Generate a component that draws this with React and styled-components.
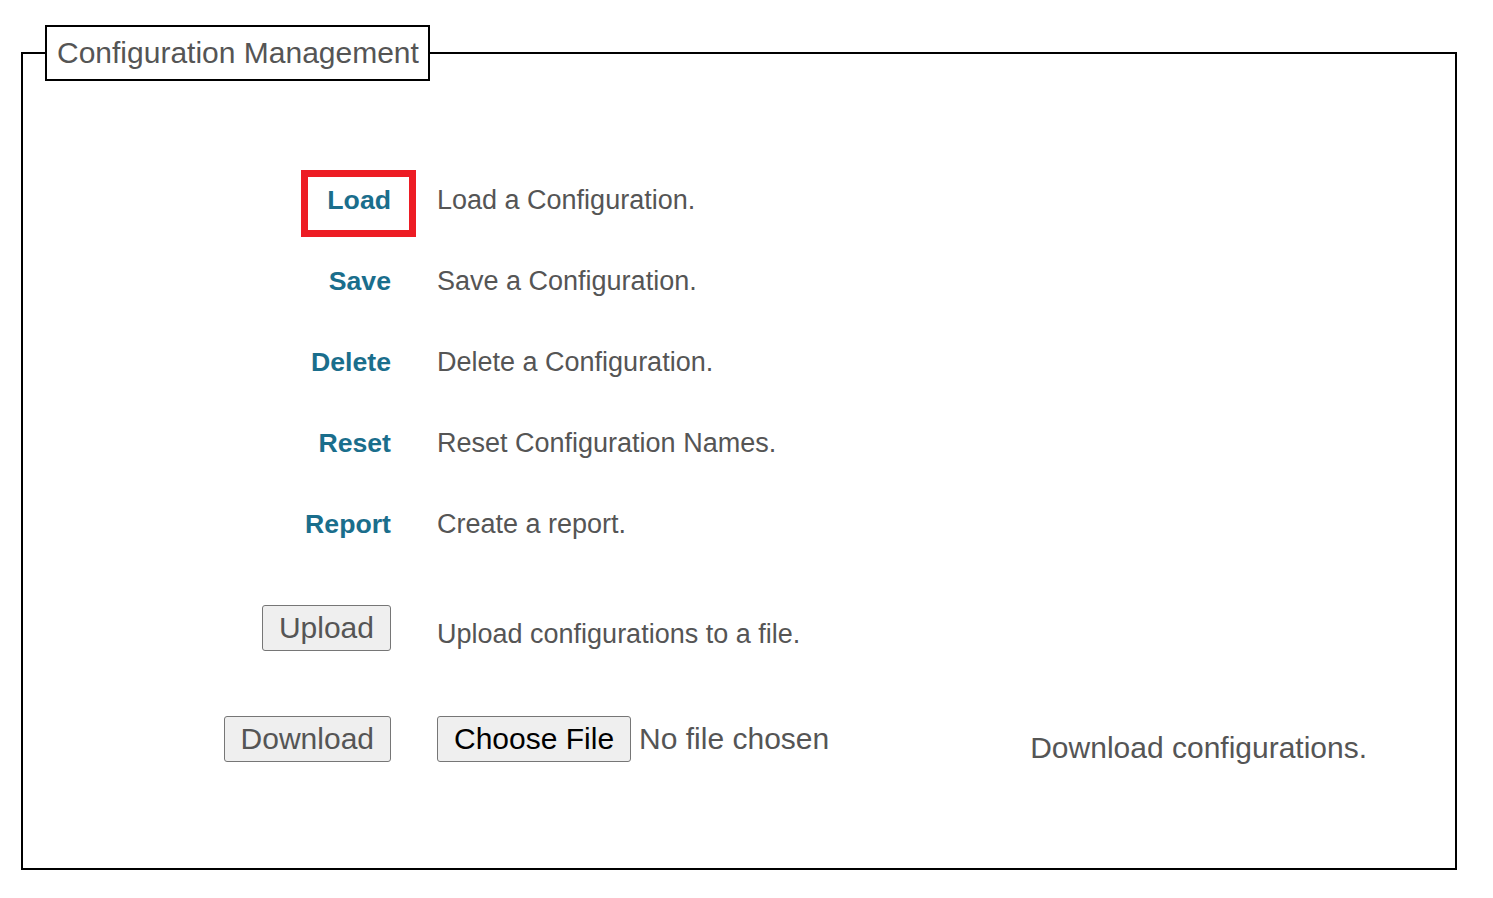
import React from "react";
import styled, { createGlobalStyle } from "styled-components";

const actions = [
  { name: "Load", text: "Load a Configuration.", highlighted: true },
  { name: "Save", text: "Save a Configuration." },
  { name: "Delete", text: "Delete a Configuration." },
  { name: "Reset", text: "Reset Configuration Names." },
  { name: "Report", text: "Create a report." },
];

const App = () => {
  return (
    <Page>
      <GlobalStyle />
      <Fieldset>
        <Legend>Configuration Management</Legend>
        <Rows>
          {actions.map((a) => (
            <Row key={a.name}>
              <LabelCell>
                <ActionLink href="#" $highlighted={a.highlighted}>
                  {a.name}
                </ActionLink>
              </LabelCell>
              <Description>{a.text}</Description>
            </Row>
          ))}
          <ButtonRow $top={40}>
            <LabelCell>
              <Button type="button">Upload</Button>
            </LabelCell>
            <Description $shift={12}>Upload configurations to a file.</Description>
          </ButtonRow>
          <ButtonRow $top={65}>
            <LabelCell>
              <Button type="button">Download</Button>
            </LabelCell>
            <FileCell>
              <FilePicker>
                <FileButton as="span">Choose File</FileButton>
                <HiddenInput type="file" />
              </FilePicker>
              <FileName>No file chosen</FileName>
              <WideDescription>Download configurations.</WideDescription>
            </FileCell>
          </ButtonRow>
        </Rows>
      </Fieldset>
    </Page>
  );
};

const GlobalStyle = createGlobalStyle`
  body {
    margin: 0;
    background: #fff;
    font-family: "Liberation Sans", Arial, sans-serif;
  }
`;

const Page = styled.div`
  padding: 25px 36px 28px 21px;
`;

const Fieldset = styled.fieldset`
  margin: 0;
  padding: 0 0 106px 0;
  border: 2px solid #000;
  min-inline-size: 0;
`;

const Legend = styled.legend`
  margin-left: 22px;
  padding: 9px 9px 9px 10px;
  border: 2px solid #000;
  font-size: 30px;
  line-height: 34px;
  color: #555;
`;

const Rows = styled.div`
  display: flex;
  flex-direction: column;
  padding-top: 79px;
`;

const Row = styled.div`
  display: grid;
  grid-template-columns: 368px 1fr;
  grid-template-rows: 81px;
  column-gap: 46px;
  align-items: center;
`;

const ButtonRow = styled(Row)`
  grid-template-rows: 46px;
  margin-top: ${(p) => p.$top}px;
`;

const LabelCell = styled.div`
  display: flex;
  justify-content: flex-end;
`;

const ActionLink = styled.a`
  position: relative;
  display: inline-block;
  font-size: 26.67px;
  line-height: 31px;
  font-weight: bold;
  color: #1a6e8c;
  text-decoration: none;

  ${(p) =>
    p.$highlighted &&
    `
    &::after {
      content: "";
      position: absolute;
      left: -26px;
      right: -25px;
      top: -15.5px;
      bottom: -20.5px;
      border: 7px solid #ed1c24;
      pointer-events: none;
    }
  `}
`;

const Description = styled.div`
  font-size: 27px;
  line-height: 31px;
  color: #555;
  padding-top: ${(p) => p.$shift || 0}px;
`;

const Button = styled.button`
  box-sizing: border-box;
  height: 46px;
  padding: 0 16px;
  border: 1px solid #767676;
  border-radius: 3px;
  background: #efefef;
  font-family: "Liberation Sans", Arial, sans-serif;
  font-size: 30px;
  line-height: 44px;
  color: #555;
  cursor: pointer;
`;

const FileCell = styled.div`
  display: flex;
  align-items: center;
`;

const FilePicker = styled.label`
  display: inline-flex;
  cursor: pointer;
`;

const FileButton = styled(Button)`
  display: inline-block;
  color: #000;
`;

const HiddenInput = styled.input`
  display: none;
`;

const FileName = styled.span`
  margin-left: 8px;
  font-size: 30px;
  line-height: 34px;
  color: #555;
`;

const WideDescription = styled.span`
  margin-left: 201px;
  padding-top: 18px;
  font-size: 30px;
  line-height: 34px;
  color: #555;
`;

export default App;
